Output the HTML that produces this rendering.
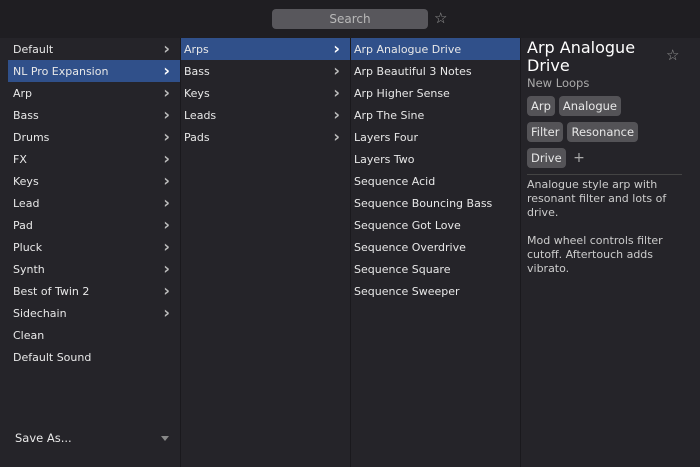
<!DOCTYPE html><html><head><style>
body{margin:0;width:700px;height:467px;background:#252429;font-family:"DejaVu Sans","Liberation Sans",sans-serif;font-size:11px;color:#e8e8e8;position:relative;overflow:hidden}
.top{position:absolute;left:0;top:0;width:700px;height:38px;background:#1f1e22}
.search{position:absolute;left:272px;top:9px;width:156px;height:20px;background:#58575c;border-radius:4px;color:#b8b8b8;text-align:center;line-height:20px;font-size:12px}
.col{position:absolute;top:39px}
.r{height:22px;line-height:22px;position:relative;white-space:nowrap}
.r .c{position:absolute;right:10px;top:-1px;color:#bbb;font-size:16px;font-weight:bold}
.sel{background:#30508a}
.div{position:absolute;top:38px;width:1px;height:429px;background:#1a191d}
.tag{display:inline-block;background:#545357;border-radius:4px;padding:0 4px;height:20px;line-height:20px;margin-right:4px;font-size:11.5px}
</style></head><body>
<div class="top"></div>
<div class="search">Search</div>
<div style="position:absolute;left:434px;top:9px;color:#999;font-size:15px">☆</div>
<div class="sel" style="position:absolute;left:8px;top:60px;width:172px;height:22px"></div>
<div class="sel" style="position:absolute;left:180px;top:38px;width:340px;height:22px"></div>
<div class="col" style="left:8px;width:172px">
<div class="r" style="padding-left:5px">Default<span class="c">›</span></div>
<div class="r" style="padding-left:5px">NL Pro Expansion<span class="c" style="color:#fff">›</span></div>
<div class="r" style="padding-left:5px">Arp<span class="c">›</span></div>
<div class="r" style="padding-left:5px">Bass<span class="c">›</span></div>
<div class="r" style="padding-left:5px">Drums<span class="c">›</span></div>
<div class="r" style="padding-left:5px">FX<span class="c">›</span></div>
<div class="r" style="padding-left:5px">Keys<span class="c">›</span></div>
<div class="r" style="padding-left:5px">Lead<span class="c">›</span></div>
<div class="r" style="padding-left:5px">Pad<span class="c">›</span></div>
<div class="r" style="padding-left:5px">Pluck<span class="c">›</span></div>
<div class="r" style="padding-left:5px">Synth<span class="c">›</span></div>
<div class="r" style="padding-left:5px">Best of Twin 2<span class="c">›</span></div>
<div class="r" style="padding-left:5px">Sidechain<span class="c">›</span></div>
<div class="r" style="padding-left:5px">Clean</div>
<div class="r" style="padding-left:5px">Default Sound</div>
</div>
<div class="col" style="left:180px;width:170px">
<div class="r" style="padding-left:4px">Arps<span class="c" style="color:#fff">›</span></div>
<div class="r" style="padding-left:4px">Bass<span class="c">›</span></div>
<div class="r" style="padding-left:4px">Keys<span class="c">›</span></div>
<div class="r" style="padding-left:4px">Leads<span class="c">›</span></div>
<div class="r" style="padding-left:4px">Pads<span class="c">›</span></div>
</div>
<div class="col" style="left:350px;width:170px">
<div class="r" style="padding-left:4px">Arp Analogue Drive</div>
<div class="r" style="padding-left:4px">Arp Beautiful 3 Notes</div>
<div class="r" style="padding-left:4px">Arp Higher Sense</div>
<div class="r" style="padding-left:4px">Arp The Sine</div>
<div class="r" style="padding-left:4px">Layers Four</div>
<div class="r" style="padding-left:4px">Layers Two</div>
<div class="r" style="padding-left:4px">Sequence Acid</div>
<div class="r" style="padding-left:4px">Sequence Bouncing Bass</div>
<div class="r" style="padding-left:4px">Sequence Got Love</div>
<div class="r" style="padding-left:4px">Sequence Overdrive</div>
<div class="r" style="padding-left:4px">Sequence Square</div>
<div class="r" style="padding-left:4px">Sequence Sweeper</div>
</div>
<div class="div" style="left:180px"></div>
<div class="div" style="left:350px"></div>
<div class="div" style="left:520px"></div>
<div style="position:absolute;left:527px;top:39px;width:165px">
<div style="font-size:16px;line-height:18px;color:#fff">Arp Analogue<br>Drive</div>
<div style="color:#aaa;font-size:11.5px;margin-top:1px">New Loops</div>
<div style="margin-top:6px"><span class="tag">Arp</span><span class="tag">Analogue</span></div>
<div style="margin-top:6px"><span class="tag">Filter</span><span class="tag">Resonance</span></div>
<div style="margin-top:6px"><span class="tag">Drive</span> <span style="color:#aaa;font-size:14px">+</span></div>
<div style="border-top:1px solid #444;width:155px;margin-top:6px;padding-top:3px;font-size:11px;line-height:14px;color:#ccc">Analogue style arp with resonant filter and lots of drive.<br><br>Mod wheel controls filter cutoff. Aftertouch adds vibrato.</div>
</div>
<div style="position:absolute;left:666px;top:46px;color:#999;font-size:15px">☆</div>
<div style="position:absolute;left:15px;top:431px;font-size:11.5px">Save As...</div>
<div style="position:absolute;left:161px;top:436px;width:0;height:0;border-left:4px solid transparent;border-right:4px solid transparent;border-top:5px solid #888"></div>
</body></html>
